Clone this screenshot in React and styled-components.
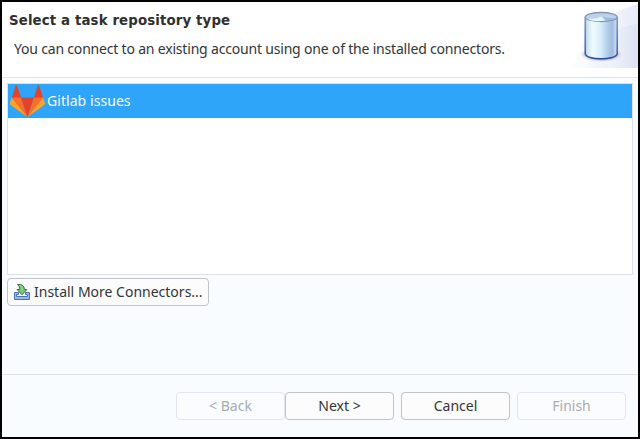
import React from "react";
import styled, { createGlobalStyle } from "styled-components";

const GlobalStyle = createGlobalStyle`
  * { box-sizing: border-box; }
  body { margin: 0; overflow: hidden; }
`;

const Dialog = styled.div`
  width: 640px;
  height: 439px;
  border: 2px solid #000;
  background: #f8fcff;
  color: #31363b;
  font: 14px/20px "Noto Sans", sans-serif;
  display: flex;
  flex-direction: column;
  white-space: nowrap;
`;

const Header = styled.header`
  height: 76px;
  flex: none;
  display: flex;
  justify-content: space-between;
  background: #fff;
  border-bottom: 1px solid #dee2e6;
`;

const Heading = styled.div`
  padding: 9px 0 0 7px;
`;

const Title = styled.h1`
  margin: 0;
  font: bold 13.33px/20px "DejaVu Sans", sans-serif;
  letter-spacing: 0.13px;
  color: #303030;
`;

const Description = styled.p`
  margin: 8px 0 0 5px;
  letter-spacing: -0.19px;
`;

const Banner = styled.svg`
  width: 66px;
  height: 66px;
  display: block;
`;

const Content = styled.main`
  flex: 1;
  padding: 5px 5px 0;
  display: flex;
  flex-direction: column;
  align-items: flex-start;
`;

const ConnectorList = styled.div`
  width: 626px;
  height: 192px;
  flex: none;
  border: 1px solid #dee2e6;
  background: #fff;
`;

const ConnectorRow = styled.div`
  height: 34px;
  display: flex;
  align-items: center;
  gap: 1px;
  padding-left: 2px;
  background: #2ea5f8;
  color: #fcfcfc;
  letter-spacing: 0.06px;
`;

const ConnectorIcon = styled.svg`
  width: 36px;
  height: 34px;
  flex: none;
`;

const Button = styled.button`
  width: ${(p) => p.$width || 109}px;
  height: 28px;
  flex: none;
  display: flex;
  align-items: center;
  justify-content: ${(p) => (p.$start ? "flex-start" : "center")};
  gap: 4px;
  padding: 0 0 0 ${(p) => (p.$start ? "6px" : "0")};
  margin: ${(p) => p.$margin || "0"};
  border: 1px solid ${(p) => (p.disabled ? "#e0e5f0" : "#c1c4c8")};
  border-radius: 4px;
  background: ${(p) => (p.disabled ? "#fafcff" : "#fcfcfc")};
  color: ${(p) => (p.disabled ? "#a9acb0" : "#31363b")};
  font: inherit;
`;

const ButtonIcon = styled.svg`
  width: 16px;
  height: 16px;
  flex: none;
`;

const Footer = styled.footer`
  height: 63px;
  flex: none;
  border-top: 1px solid #dee2e6;
  padding: 17px 12px 0 0;
  display: flex;
  justify-content: flex-end;
`;

function RepositoryBanner() {
  return (
    <Banner viewBox="0 0 66 66">
      <defs>
        <linearGradient id="outerSwoosh">
          <stop offset="0" stopColor="#fdfdff" />
          <stop offset=".6" stopColor="#f3f5fc" />
          <stop offset="1" stopColor="#e6eaf8" />
        </linearGradient>
        <linearGradient id="innerSwoosh">
          <stop offset="0" stopColor="#f7f8fd" />
          <stop offset=".6" stopColor="#eceffa" />
          <stop offset="1" stopColor="#dce2f5" />
        </linearGradient>
        <linearGradient id="body">
          <stop offset="0" stopColor="#b4d0e8" />
          <stop offset=".12" stopColor="#daedf7" />
          <stop offset=".25" stopColor="#effbfd" />
          <stop offset=".5" stopColor="#d5edfa" />
          <stop offset=".75" stopColor="#a9c6e6" />
          <stop offset=".85" stopColor="#a2bce0" />
          <stop offset="1" stopColor="#d6e4f5" />
        </linearGradient>
        <linearGradient id="rim" x1="0" y1="0" x2="0" y2="1">
          <stop offset="0" stopColor="#8396b8" />
          <stop offset=".6" stopColor="#4f78b6" />
          <stop offset="1" stopColor="#2450a0" />
        </linearGradient>
        <radialGradient id="shade">
          <stop offset=".65" stopColor="#8a6f86" stopOpacity=".6" />
          <stop offset="1" stopColor="#cdbfd0" stopOpacity="0" />
        </radialGradient>
      </defs>
      <path d="M0 66Q14 16 66 2V66Z" fill="url(#outerSwoosh)" />
      <path d="M14 66Q26 27 66 21.5V66Z" fill="url(#innerSwoosh)" />
      <ellipse cx="29.3" cy="52.5" rx="21.5" ry="7.5" fill="url(#shade)" />
      <path d="M13.2 15V51.5C13.8 58.6 44.6 58.6 45.2 51.5V15" fill="url(#body)" stroke="url(#rim)" strokeWidth="1.5" />
      <ellipse cx="29.2" cy="15" rx="16" ry="4.5" fill="#bcd2eb" stroke="#8296b8" strokeWidth="1.3" />
      <path d="M14.5 16.2Q22 18 29.5 14.5L34 18.2Q26 20 19 18.4Z" fill="#e3f4fb" />
      <path d="M29.5 14.5Q37 16.5 43.8 16Q40 18.3 34 18.4Z" fill="#9fb9de" />
    </Banner>
  );
}

function GitlabIcon() {
  return (
    <ConnectorIcon viewBox="0.5 0 36 34">
      <path d="M2.3 13.4L.5 18.8Q.1 20 1.2 20.9L17.9 33Z" fill="#fca326" />
      <path d="M33.6 13.4L35.4 18.8Q35.8 20 34.7 20.9L17.9 33Z" fill="#fca326" />
      <path d="M2.3 13.4H11.5L17.9 33Z" fill="#fc6d26" />
      <path d="M33.6 13.4H24.4L17.9 33Z" fill="#fc6d26" />
      <path d="M11.5 13.4H24.4L17.9 33Z" fill="#e24329" />
      <path d="M2.3 13.4L6.3 1.5Q6.9.3 7.5 1.5L11.5 13.4Z" fill="#e24329" />
      <path d="M24.4 13.4L28.4 1.5Q29 .3 29.6 1.5L33.6 13.4Z" fill="#e24329" />
    </ConnectorIcon>
  );
}

function InstallIcon() {
  return (
    <ButtonIcon viewBox="0 0 16 16">
      <path d="M2 9H14V13H2Z" fill="#fff" />
      <path d="M.5 8.5H4.5V10.5H2.5V12.5H13.5V10.5H11.5V8.5H15.5V15.5H.5Z" fill="#9bb7e2" stroke="#4a74b6" />
      <path d="M3.5.5Q10-.3 10.5 5.5H12.9L8 10.8L3 5.5H5.5Q6.3 2.7 3.5.5Z" fill="#72c472" stroke="#2c7c4c" />
      <path d="M6.2 1.6Q8.6 3 8.2 6.5" fill="none" stroke="#b3e69c" />
    </ButtonIcon>
  );
}

export default function App() {
  return (
    <>
      <GlobalStyle />
      <Dialog>
        <Header>
          <Heading>
            <Title>Select a task repository type</Title>
            <Description>You can connect to an existing account using one of the installed connectors.</Description>
          </Heading>
          <RepositoryBanner />
        </Header>
        <Content>
          <ConnectorList>
            <ConnectorRow>
              <GitlabIcon />
              <span>Gitlab issues</span>
            </ConnectorRow>
          </ConnectorList>
          <Button $width={202} $start $margin="3px 0 0">
            <InstallIcon />
            <span>Install More Connectors...</span>
          </Button>
        </Content>
        <Footer>
          <Button disabled>&lt; Back</Button>
          <Button>Next &gt;</Button>
          <Button $margin="0 7px">Cancel</Button>
          <Button disabled>Finish</Button>
        </Footer>
      </Dialog>
    </>
  );
}
